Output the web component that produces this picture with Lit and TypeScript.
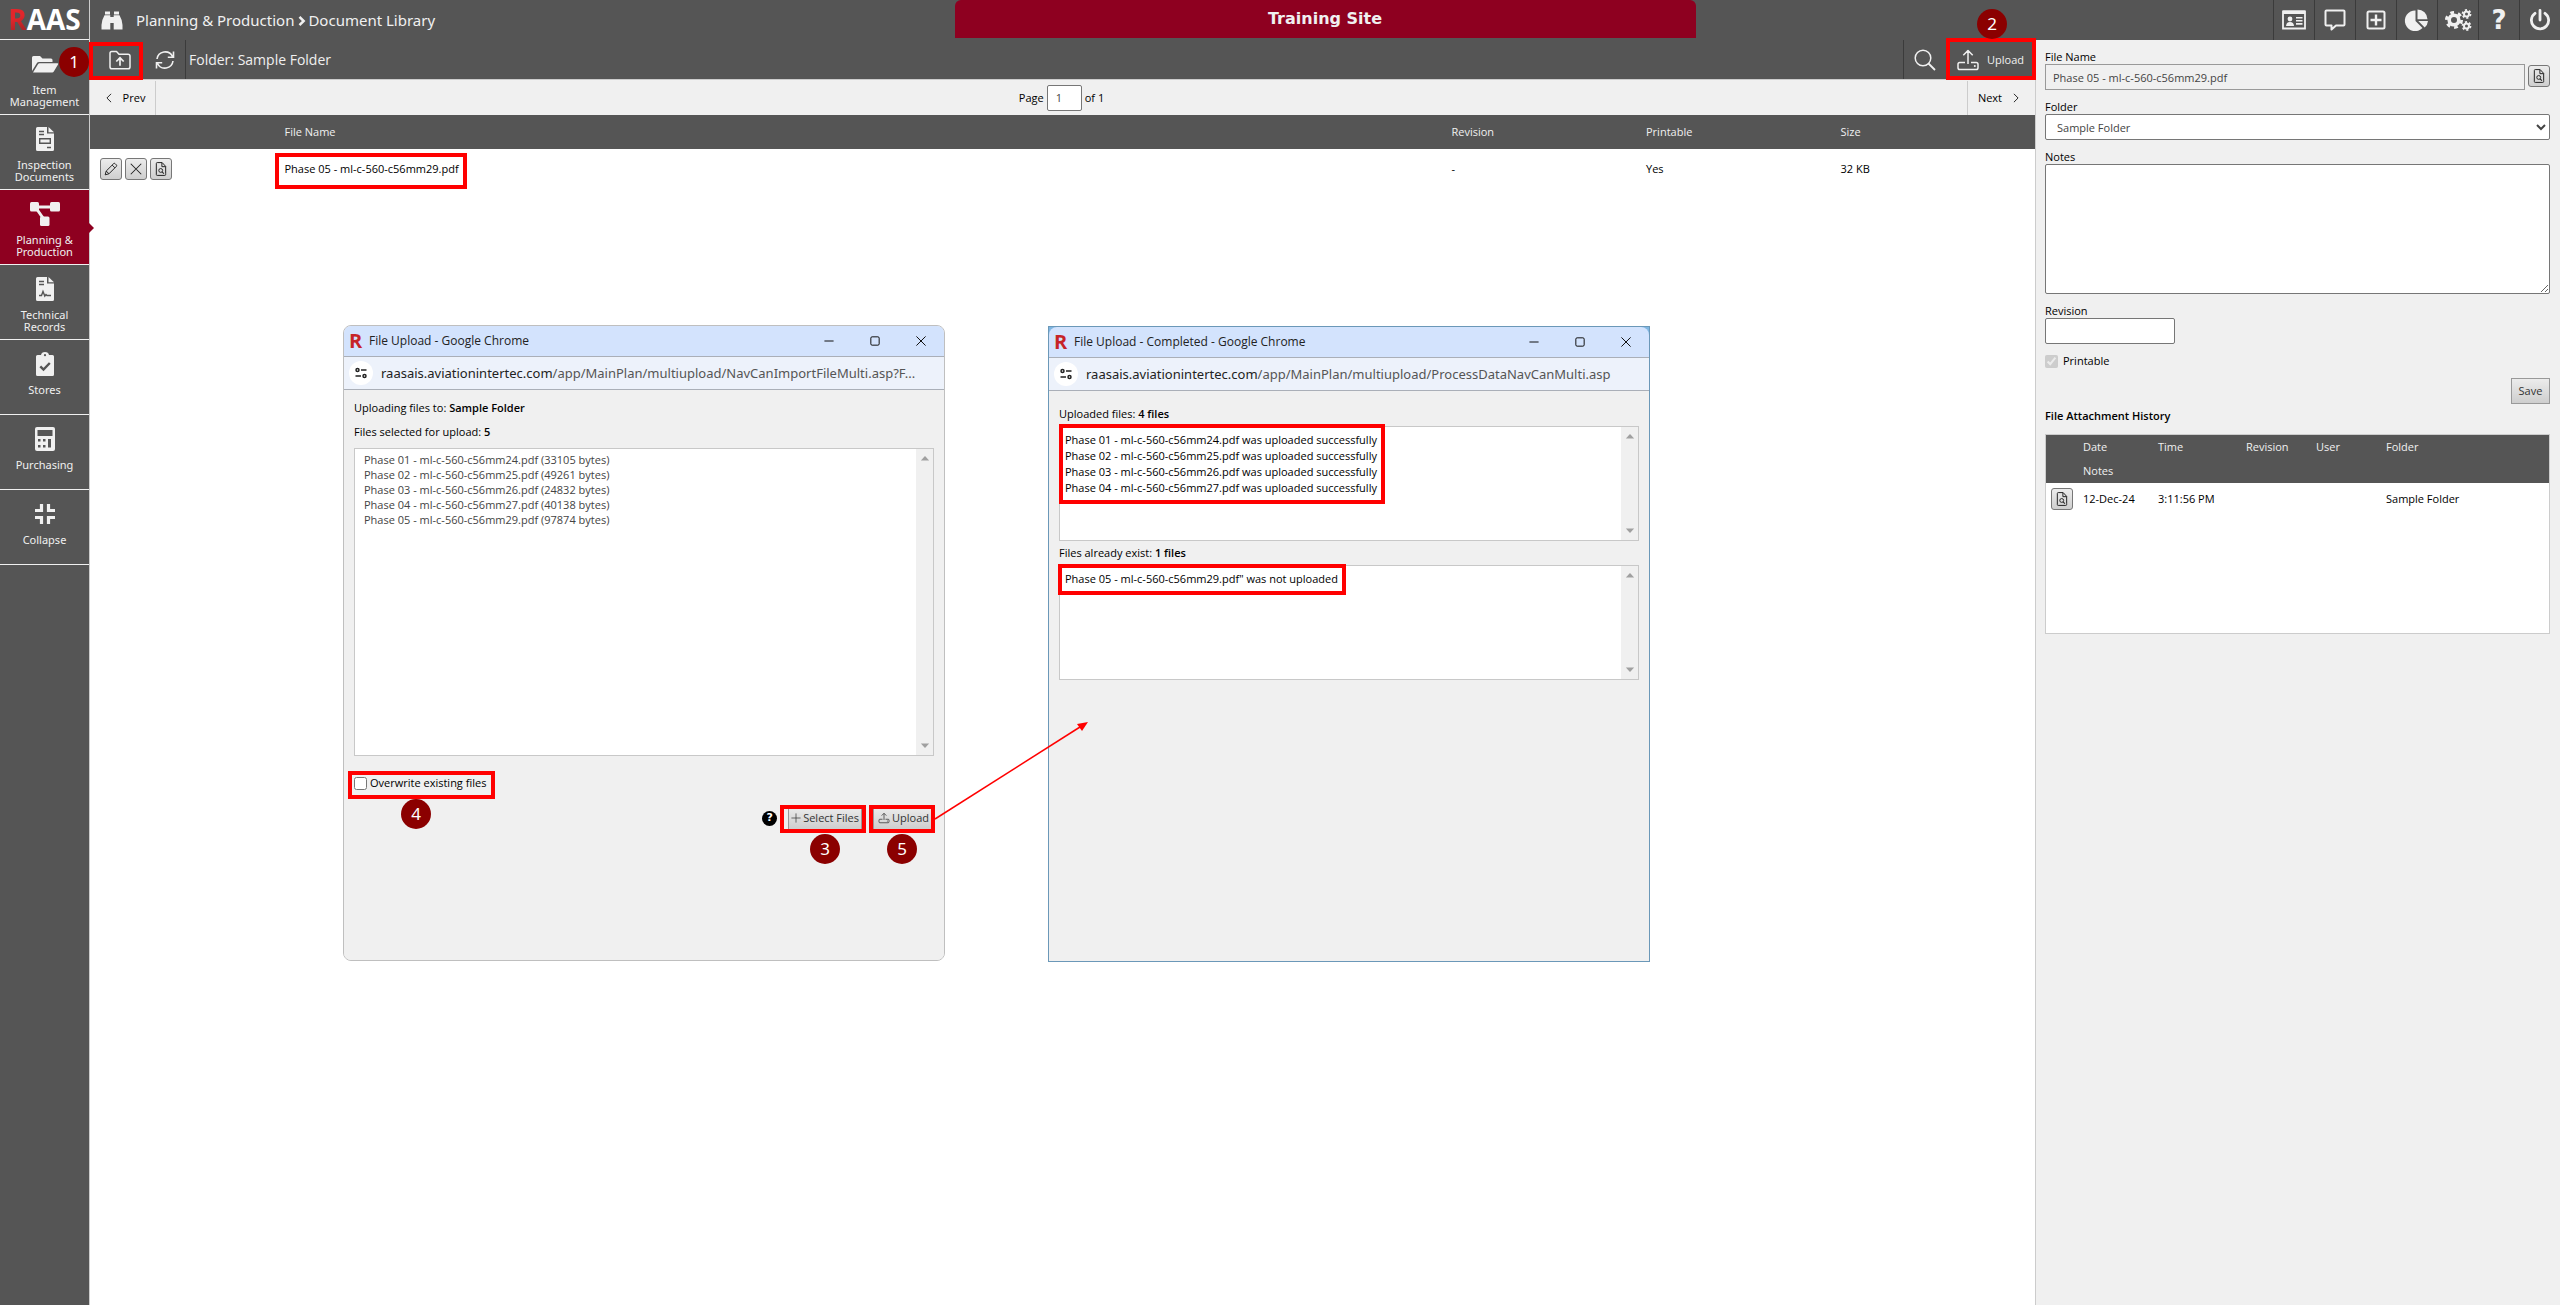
import { LitElement, html, svg, css, type TemplateResult } from "lit";
import { customElement, property } from "lit/decorators.js";
import { classMap } from "lit/directives/class-map.js";

/* Every icon is drawn on a 24 x 24 grid with currentColor. */
const icons: Record<string, TemplateResult> = {
  folderOpen: svg`<path fill="currentColor" d="M-1 19V5.500Q-1 4 .5 4H7l2.500 2.500H18Q19.500 6.500 19.500 8v2H6Q4.500 10 3.800 11.300ZM0 20.500 5 12.300Q5.600 11.300 6.700 11.300H24.300Q25.800 11.300 25 12.600L20.800 19.600Q20.200 20.500 19.200 20.500Z"/>`,
  invoice: svg`<path fill="currentColor" d="M3 1.500Q3 0 4.500 0H14v6.500h7v16Q21 24 19.500 24h-15Q3 24 3 22.500Z"/><path fill="currentColor" d="M15.500 0 21 5.300H15.500Z"/><path stroke="#555" stroke-width="1.400" fill="none" d="M6 4.500h5M6 7.500h5M14 20.500h4M6.700 11.700h10.600v4.600H6.700Z"/>`,
  nodes: svg`<g fill="currentColor"><rect x="-3" y="0" width="9" height="9.500" rx="1.500"/><rect x="17" y="0" width="10" height="9.500" rx="1.500"/><rect x="7" y="14.500" width="9.500" height="9.500" rx="1.500"/></g><path stroke="currentColor" stroke-width="3" d="M4 5H18M3 6 10 16"/>`,
  contract: svg`<path fill="currentColor" d="M3 1.500Q3 0 4.500 0H14v6.500h7v16Q21 24 19.500 24h-15Q3 24 3 22.500Z"/><path fill="currentColor" d="M15.500 0 21 5.300H15.500Z"/><path stroke="#555" stroke-width="1.400" fill="none" d="M6 4.500h5M6 7.500h5M6 18.500H8.500L10 14.500 11.800 19 13 17.500 14 18.500H18"/>`,
  clipboard: svg`<path fill="currentColor" d="M4.500 3H8Q8.500 0 12 0t4 3h3.500Q21 3 21 4.500v18Q21 24 19.500 24h-15Q3 24 3 22.500v-18Q3 3 4.500 3Z"/><circle cx="12" cy="3.200" r="1.100" fill="#555"/><path fill="none" stroke="#555" stroke-width="2.400" d="m7.300 14.300 3.200 3.200 6.300-6.500"/>`,
  calculator: svg`<rect x="2" y="0" width="20" height="24" rx="2" fill="currentColor"/><path fill="#555" d="M4.500 3h15v6h-15ZM5 12h2.500v2.500H5Zm5 0h2.500v2.500H10Zm5 0h3v8.500h-3ZM5 18h2.500v2.500H5Zm5 0h2.500v2.500H10Z"/>`,
  compress: svg`<path fill="none" stroke="currentColor" stroke-width="3.200" d="M2 8.500H8.500V2M15.500 2V8.500H22M2 15.500H8.500V22M15.500 22V15.500H22"/>`,
  binoculars: svg`<path fill="currentColor" d="M5 3.500h5v3H5ZM14 3.500h5v3h-5ZM4.500 7.300H10.300V21.500H1.500V17Q1.700 12 4.500 7.300ZM19.500 7.300H13.700V21.500h8.800V17Q22.300 12 19.500 7.300ZM10.300 9h3.400v6h-3.400Z"/>`,
  chevron: svg`<path fill="none" stroke="currentColor" stroke-width="6" d="M6 2 16 12 6 22"/>`,
  idCard: svg`<path fill="none" stroke="currentColor" stroke-width="1.800" d="M1 3.500H23V20.500H1Z"/><path fill="currentColor" d="M1 2.500h22V6H1Z"/><circle cx="8" cy="11" r="2.400" fill="currentColor"/><path fill="currentColor" d="M4 18q.2-4 4-4t4 4Z"/><path stroke="currentColor" stroke-width="1.600" d="M14 9.700h6.500M14 12.800h6.500M14 15.900h6.500"/>`,
  comment: svg`<path fill="none" stroke="currentColor" stroke-width="2" stroke-linejoin="round" d="M3.500 2.500h17q1 0 1 1v13q0 1-1 1H13L8.500 21.500V17.500h-5q-1 0-1-1v-13q0-1 1-1Z"/>`,
  plusBox: svg`<rect x="3.500" y="3.500" width="17" height="17" rx="1.500" fill="none" stroke="currentColor" stroke-width="2"/><path stroke="currentColor" stroke-width="2.400" d="M12 6.500v11M6.500 12h11"/>`,
  pie: svg`<path fill="currentColor" d="M10.500 2.500V13l7 7A10.300 10.300 0 1 1 10.500 2.500ZM12.500 1.500A10 10 0 0 1 22.500 11.300H12.500ZM13.300 13H23a10 10 0 0 1-3.300 6.500Z"/>`,
  gears: svg`<g fill="none" stroke="currentColor"><circle cx="8" cy="12" r="4.800" stroke-width="3.600"/><circle cx="8" cy="12" r="7.600" stroke-width="2.800" stroke-dasharray="3.800 4.158"/><circle cx="20.500" cy="6" r="2.500" stroke-width="2"/><circle cx="20.500" cy="6" r="4" stroke-width="1.800" stroke-dasharray="2.100 2.088"/><circle cx="20.500" cy="18" r="2.500" stroke-width="2"/><circle cx="20.500" cy="18" r="4" stroke-width="1.800" stroke-dasharray="2.100 2.088"/></g>`,
  power: svg`<path fill="none" stroke="currentColor" stroke-width="2.800" stroke-linecap="round" d="M7 5.300a8.600 8.600 0 1 0 10 0M12 2.500v9.500"/>`,
  folderUp: svg`<path fill="none" stroke="currentColor" stroke-width="1.500" stroke-linejoin="round" d="M2 5.300Q2 3.500 3.800 3.500H8.500L11 6.300h9Q22 6.300 22 8.300V19Q22 20.800 20 20.800H4Q2 20.800 2 19Z"/><path fill="none" stroke="currentColor" stroke-width="1.700" d="M12 17.800V10.500M8.300 13.500 12 9.800l3.700 3.700"/>`,
  refresh: svg`<path fill="none" stroke="currentColor" stroke-width="1.600" d="M4 11A8.200 8.200 0 0 1 19.500 8.500M20 13A8.200 8.200 0 0 1 4.500 15.500M20.500 3.500v5.700h-5.700M3.500 20.500v-5.700H9.200"/>`,
  search: svg`<circle cx="10" cy="10" r="7.800" fill="none" stroke="currentColor" stroke-width="1.500"/><path stroke="currentColor" stroke-width="1.800" d="m15.500 15.500 6.500 6.500"/>`,
  upload: svg`<path fill="none" stroke="currentColor" stroke-width="1.500" stroke-linejoin="round" d="M12 16V3M7.300 7.300 12 2.500l4.700 4.800M9 14.500H3.800Q2 14.500 2 16.300v3.400Q2 21.500 3.800 21.500H20.200Q22 21.500 22 19.700V16.300Q22 14.500 20.200 14.500H15"/><circle cx="18.800" cy="18" r="1" fill="currentColor"/>`,
  pencil: svg`<path fill="none" stroke="currentColor" stroke-width="1.700" stroke-linejoin="round" d="M2 22 3.800 15.500 16.500 2.800Q17.700 1.600 19 2.800L21.200 5Q22.400 6.300 21.200 7.500L8.500 20.200ZM14 5.300 18.700 10M3.800 15.500 8.500 20.200"/>`,
  cross: svg`<path stroke="currentColor" stroke-width="1.800" d="M3 3 21 21M21 3 3 21"/>`,
  docSearch: svg`<path fill="none" stroke="currentColor" stroke-width="1.700" stroke-linejoin="round" d="M20 20V7.500L14 1H5.500Q4 1 4 2.500v19Q4 23 5.500 23H18.500Q20 23 20 21.500ZM13.500 1.500V8H20"/><circle cx="11.500" cy="14.500" r="3.300" fill="none" stroke="currentColor" stroke-width="1.600"/><path stroke="currentColor" stroke-width="1.800" d="m13.800 16.800 3.200 3.200"/>`,
  left: svg`<path fill="none" stroke="currentColor" stroke-width="2" d="M17 2 7 12 17 22"/>`,
  right: svg`<path fill="none" stroke="currentColor" stroke-width="2" d="M7 2 17 12 7 22"/>`,
  plus: svg`<path stroke="currentColor" stroke-width="1.700" d="M12 1v22M1 12h22"/>`,
  minimise: svg`<path stroke="currentColor" stroke-width="2.400" d="M1 12h22"/>`,
  maximise: svg`<rect x="2" y="2" width="20" height="20" rx="3" fill="none" stroke="currentColor" stroke-width="2.400"/>`,
  close: svg`<path stroke="currentColor" stroke-width="2.400" d="M1 1 23 23M23 1 1 23"/>`,
  tune: svg`<g fill="none" stroke="currentColor" stroke-width="3"><circle cx="5" cy="6" r="3"/><path d="M12 6h11M1 18h11"/><circle cx="19" cy="18" r="3"/></g>`,
  up: svg`<path fill="currentColor" d="M2 18 12 7 22 18Z"/>`,
  down: svg`<path fill="currentColor" d="M2 6 12 17 22 6Z"/>`,
};

const icon = (name: string, size = "s24") =>
  html`<svg class="icon ${size}" viewBox="0 0 24 24" aria-hidden="true">${icons[name]}</svg>`;

const shared = css`
  * { box-sizing: border-box; }
  .icon { display: block; flex: none; overflow: visible; }
  .s10 { width: 10px; height: 10px; }
  .s12 { width: 12px; height: 12px; }
  .s14 { width: 14px; height: 14px; }
  .s24 { width: 24px; height: 24px; }
  button, input, select, textarea { font: inherit; margin: 0; color: #444; }
  button { display: flex; align-items: center; justify-content: center; padding: 0; border: 0; background: none; color: inherit; }
  .push { display: flex; align-items: center; gap: 2px; border: 1px solid #999; background: linear-gradient(#ececec, #cecece); color: #333; }
`;

@customElement("popup-window")
export class PopupWindow extends LitElement {
  @property() heading = "";
  @property() domain = "";
  @property() path = "";
  @property({ type: Boolean, reflect: true }) active = false;

  static styles = [shared, css`
    :host { display: flex; flex-direction: column; border: 1px solid #bfbfbf; border-radius: 8px; background: #f0f0f0; overflow: hidden; }
    :host([active]) { border-color: #6b98b8; border-radius: 0; background: linear-gradient(#7fb6e2 10px, #f0f0f0 10px); }
    .bar { display: flex; align-items: center; height: 31px; padding: 0 18px 0 5px; background: #d3e3fd; border-bottom: 1px solid #aaafb8; color: #222; font-size: 12px; }
    :host([active]) .bar { border-radius: 8px 8px 0 0; }
    .mark { width: 20px; font-size: 20px; font-weight: 700; line-height: 20px; color: #c62428; }
    .controls { display: flex; gap: 36px; margin-left: auto; color: #111; }
    .address { display: flex; align-items: center; gap: 8px; height: 33px; padding: 0 5px; background: #edf2fb; border-bottom: 1px solid #aaafb8; font-family: "Noto Sans", "Open Sans", sans-serif; font-size: 13px; color: #555; white-space: nowrap; }
    .site { display: flex; align-items: center; justify-content: center; width: 24px; height: 24px; border-radius: 50%; background: #fff; color: #222; }
    .domain { color: #222; }
    .body { flex: 1; background: #f0f0f0; }
  `];

  render() {
    return html`
      <div class="bar">
        <span class="mark">R</span><span>${this.heading}</span>
        <div class="controls">
          <button aria-label="Minimise">${icon("minimise", "s10")}</button>
          <button aria-label="Maximise">${icon("maximise", "s10")}</button>
          <button aria-label="Close">${icon("close", "s10")}</button>
        </div>
      </div>
      <div class="address">
        <button class="site" aria-label="Site information">${icon("tune", "s12")}</button>
        <span><span class="domain">${this.domain}</span>${this.path}</span>
      </div>
      <div class="body"><slot></slot></div>`;
  }
}

const navItems: [string, string][] = [
  ["Item Management", "folderOpen"],
  ["Inspection Documents", "invoice"],
  ["Planning & Production", "nodes"],
  ["Technical Records", "contract"],
  ["Stores", "clipboard"],
  ["Purchasing", "calculator"],
  ["Collapse", "compress"],
];

const tools: [string, string][] = [
  ["Contacts", "idCard"],
  ["Messages", "comment"],
  ["Add", "plusBox"],
  ["Reports", "pie"],
  ["Settings", "gears"],
  ["Help", ""],
  ["Log off", "power"],
];

const selected: [string, number][] = [
  ["Phase 01 - ml-c-560-c56mm24.pdf", 33105],
  ["Phase 02 - ml-c-560-c56mm25.pdf", 49261],
  ["Phase 03 - ml-c-560-c56mm26.pdf", 24832],
  ["Phase 04 - ml-c-560-c56mm27.pdf", 40138],
  ["Phase 05 - ml-c-560-c56mm29.pdf", 97874],
];

@customElement("app-root")
export class AppRoot extends LitElement {
  static styles = [shared, css`
    :host { position: relative; display: flex; min-height: 100vh; overflow: hidden; background: #fff; color: #000; font-family: "Open Sans", "Noto Sans", sans-serif; font-size: 11px; line-height: 14px; }
    b { font-weight: 600; }

    .nav { flex: none; width: 90px; background: #555; border-right: 1px solid #ccc; color: #f0f0f0; font-family: "Noto Sans", "Open Sans", sans-serif; }
    .logo { display: flex; align-items: center; justify-content: center; height: 40px; border-bottom: 1px solid #f0f0f0; font-family: "Open Sans", sans-serif; font-size: 28px; font-weight: 700; line-height: 39px; color: #fff; text-decoration: none; }
    .logo-r { background: linear-gradient(160deg, #e2262b 45%, #ac2428 75%); background-clip: text; color: transparent; }
    .nav-item { position: relative; display: flex; flex-direction: column; align-items: center; gap: 8px; height: 75px; padding: 12px 8px 0; border-bottom: 1px solid #f0f0f0; line-height: 12px; text-align: center; color: inherit; text-decoration: none; }
    .nav-item.current { background: #8e0020; }
    .nav-item.current::after { content: ""; position: absolute; right: -5px; top: 33px; border: solid transparent; border-width: 5px 0 5px 5px; border-left-color: #8e0020; }

    .page { flex: 1; display: flex; flex-direction: column; min-width: 0; }
    .top { display: grid; grid-template-columns: 35fr 30fr 35fr; height: 40px; background: #555; color: #f0f0f0; }
    .crumbs { display: flex; align-items: center; padding-left: 10px; font-family: "Noto Sans", "Open Sans", sans-serif; font-size: 15px; white-space: nowrap; }
    .crumbs .s24 { margin-right: 12px; }
    .crumbs .s10 { margin: 2px 1px 0 3px; }
    .banner { height: 38px; border-radius: 6px 6px 0 0; background: #8e0020; font-family: "DejaVu Sans", sans-serif; font-size: 16px; font-weight: 700; line-height: 38px; text-align: center; }
    .tools { display: flex; justify-content: flex-end; }
    .tool { width: 41px; border-left: 1px solid #3b3b3b; }
    .help { font-family: "DejaVu Sans", sans-serif; font-size: 26px; font-weight: 700; }

    .content { flex: 1; display: flex; min-height: 0; }
    .main { flex: 1; min-width: 0; }
    .toolbar { display: flex; height: 40px; background: #555; border-bottom: 1px solid #ccc; color: #f0f0f0; }
    .folder-tools { display: flex; gap: 21px; padding: 0 8px 0 18px; border-right: 1px solid #3b3b3b; }
    .folder-name { display: flex; align-items: center; padding-left: 3px; font-size: 14px; }
    .search { width: 42px; margin-left: auto; border-left: 1px solid #3b3b3b; }
    .upload { gap: 7px; width: 90px; }

    .pager { display: flex; align-items: center; justify-content: space-between; height: 35px; background: #f0f0f0; }
    .prev, .next { gap: 9px; height: 34px; align-self: flex-end; }
    .prev { width: 66px; padding-left: 4px; border-right: 1px solid #ccc; }
    .next { width: 68px; padding-right: 4px; border-left: 1px solid #ccc; }
    .page-pick { display: flex; align-items: center; gap: 3px; }
    .page-pick input { width: 35px; height: 26px; padding: 0 8px; }

    table { width: 100%; border-collapse: collapse; table-layout: fixed; }
    th, td { padding: 0; font-weight: 400; text-align: left; }
    .files th { height: 34px; background: #555; color: #f0f0f0; }
    .files td { height: 40px; }
    .files .actions { width: 10%; }
    .files .name { width: 60%; }
    .row-actions { display: flex; gap: 3px; padding-left: 10px; }
    .mini { width: 22px; height: 22px; border: 1px solid #777; border-radius: 3px; background: linear-gradient(#ececec, #cecece); color: #222; }

    .side { flex: none; width: 525px; padding: 10px 10px 10px 9px; border-left: 1px solid #ccc; background: #f0f0f0; }
    .field { display: block; margin-bottom: 10px; }
    .box { display: block; width: 100%; height: 26px; padding: 0 7px; border: 1px solid #767676; border-radius: 2px; background: #fff; }
    .with-button { display: flex; gap: 3px; align-items: flex-start; }
    .with-button .box { background: #f0f0f0; border-color: #999; border-radius: 0; }
    .with-button .mini { margin-top: 1px; flex: none; }
    .notes { height: 130px; }
    .short { width: 130px; }
    .tick { display: flex; align-items: center; gap: 5px; }
    input[type="checkbox"] { width: 13px; height: 13px; }
    .save { width: 39px; height: 26px; margin: 10px 0 5px auto; }
    .side h2 { margin: 0 0 11px; font-size: 11px; line-height: 14px; font-weight: 600; }
    .history { height: 200px; border: 1px solid #ccc; background: #fff; }
    .history th { height: 24px; background: #555; color: #f0f0f0; }
    .history td { height: 32px; }
    .history .mini { margin-left: 5px; }
    .c-icon { width: 37px; } .c-date { width: 75px; } .c-time { width: 88px; } .c-rev, .c-user { width: 70px; }

    .win { position: absolute; width: 602px; height: 636px; }
    .win.one { left: 343px; top: 325px; }
    .win.two { left: 1048px; top: 326px; }
    .pane { display: flex; flex-direction: column; padding: 10px 10px; line-height: 16px; }
    .pane p { margin: 0 0 8px; }
    .scroller { display: flex; border: 1px solid #c8c8c8; background: #fff; }
    .scroller textarea { flex: 1; padding: 3px 9px; border: 0; outline: 0; resize: none; overflow: hidden; background: none; line-height: 15px; }
    .scroller ul { flex: 1; margin: 0; padding: 5px; list-style: none; }
    .track { display: flex; flex-direction: column; justify-content: space-between; align-items: center; width: 17px; padding: 4px 0; background: #f0f0f0; color: #a0a0a0; }
    .tall { height: 308px; }
    .low { height: 115px; }
    .overwrite { display: flex; align-items: center; gap: 3px; margin-top: 19px; }
    .send { display: flex; align-items: center; justify-content: flex-end; gap: 11px; margin-top: 15px; }
    .send .push { height: 24px; padding: 0 4px; }
    .send .push.pick { padding: 0 2px; }
    .about { width: 15px; height: 15px; border-radius: 50%; background: #000; color: #fff; font-family: "DejaVu Sans", sans-serif; font-weight: 700; }
    .pane.done { padding-top: 15px; }
    .pane.done p { margin: 0 0 4px; }
    .pane.done p + .scroller { margin-bottom: 4px; }

    .mark { position: absolute; border: 4px solid #f00; pointer-events: none; }
    .m-folder { left: 89px; top: 42px; width: 54px; height: 38px; }
    .m-upload { left: 1946px; top: 38px; width: 90px; height: 42px; }
    .m-file { left: 275px; top: 153px; width: 192px; height: 36px; }
    .m-over { left: 348px; top: 771px; width: 147px; height: 28px; }
    .m-pick { left: 780px; top: 805px; width: 86px; height: 28px; }
    .m-send { left: 869px; top: 805px; width: 66px; height: 28px; }
    .m-ok { left: 1059px; top: 424px; width: 326px; height: 80px; }
    .m-no { left: 1058px; top: 564px; width: 288px; height: 31px; }
    .step { position: absolute; width: 30px; height: 30px; border-radius: 50%; background: #8b0000; color: #fff; font-family: "Noto Sans", sans-serif; font-size: 17px; line-height: 30px; text-align: center; }
    .s-1 { left: 59px; top: 47px; }
    .s-2 { left: 1977px; top: 9px; }
    .s-3 { left: 810px; top: 834px; }
    .s-4 { left: 401px; top: 799px; }
    .s-5 { left: 887px; top: 834px; }
    .arrow { position: absolute; left: 935px; top: 720px; width: 154px; height: 100px; pointer-events: none; }
  `];

  private track() {
    return html`<div class="track" aria-hidden="true">${icon("up", "s10")}${icon("down", "s10")}</div>`;
  }

  private mini(name: string, label: string) {
    return html`<button class="mini" aria-label=${label}>${icon(name, "s14")}</button>`;
  }

  render() {
    return html`
      <nav class="nav">
        <a class="logo" href="#" aria-label="RAAS"><span class="logo-r">R</span>AAS</a>
        ${navItems.map(([label, glyph]) => html`
          <a href="#" class=${classMap({ "nav-item": true, current: glyph === "nodes" })}>${icon(glyph)}<span>${label}</span></a>`)}
      </nav>

      <div class="page">
        <header class="top">
          <div class="crumbs">${icon("binoculars")}<span>Planning &amp; Production</span>${icon("chevron", "s10")}<span>Document Library</span></div>
          <div class="banner">Training Site</div>
          <div class="tools">
            ${tools.map(([label, glyph]) => html`<button class="tool" aria-label=${label}>${glyph ? icon(glyph) : html`<span class="help">?</span>`}</button>`)}
          </div>
        </header>

        <div class="content">
          <main class="main">
            <div class="toolbar">
              <div class="folder-tools">
                <button aria-label="Parent folder">${icon("folderUp")}</button>
                <button aria-label="Refresh">${icon("refresh")}</button>
              </div>
              <div class="folder-name">Folder: Sample Folder</div>
              <button class="search" aria-label="Search">${icon("search")}</button>
              <button class="upload">${icon("upload")}<span>Upload</span></button>
            </div>
            <div class="pager">
              <button class="prev">${icon("left", "s10")}<span>Prev</span></button>
              <div class="page-pick"><label for="page">Page</label><input id="page" class="box" value="1" /><span>of 1</span></div>
              <button class="next"><span>Next</span>${icon("right", "s10")}</button>
            </div>
            <table class="files">
              <thead><tr><th class="actions"></th><th class="name">File Name</th><th>Revision</th><th>Printable</th><th>Size</th></tr></thead>
              <tbody><tr>
                <td><div class="row-actions">${this.mini("pencil", "Edit")}${this.mini("cross", "Delete")}${this.mini("docSearch", "View")}</div></td>
                <td>Phase 05 - ml-c-560-c56mm29.pdf</td><td>-</td><td>Yes</td><td>32 KB</td>
              </tr></tbody>
            </table>
          </main>

          <aside class="side">
            <div class="field">
              <label for="file">File Name</label>
              <div class="with-button"><input id="file" class="box" readonly value="Phase 05 - ml-c-560-c56mm29.pdf" />${this.mini("docSearch", "View file")}</div>
            </div>
            <div class="field"><label for="folder">Folder</label><select id="folder" class="box"><option>Sample Folder</option></select></div>
            <div class="field"><label for="notes">Notes</label><textarea id="notes" class="box notes"></textarea></div>
            <div class="field"><label for="revision">Revision</label><input id="revision" class="box short" /></div>
            <label class="tick"><input type="checkbox" checked disabled />Printable</label>
            <button class="push save">Save</button>
            <h2>File Attachment History</h2>
            <div class="history">
              <table>
                <thead>
                  <tr><th class="c-icon"></th><th class="c-date">Date</th><th class="c-time">Time</th><th class="c-rev">Revision</th><th class="c-user">User</th><th>Folder</th></tr>
                  <tr><th></th><th colspan="5">Notes</th></tr>
                </thead>
                <tbody><tr><td>${this.mini("docSearch", "View version")}</td><td>12-Dec-24</td><td>3:11:56 PM</td><td></td><td></td><td>Sample Folder</td></tr></tbody>
              </table>
            </div>
          </aside>
        </div>
      </div>

      <popup-window class="win one" heading="File Upload - Google Chrome" domain="raasais.aviationintertec.com" path="/app/MainPlan/multiupload/NavCanImportFileMulti.asp?F...">
        <div class="pane">
          <p>Uploading files to: <b>Sample Folder</b></p>
          <p><label for="queue">Files selected for upload: <b>${selected.length}</b></label></p>
          <div class="scroller tall">
            <textarea id="queue" readonly .value=${selected.map(([n, b]) => `${n} (${b} bytes)`).join("\n")}></textarea>
            ${this.track()}
          </div>
          <label class="overwrite"><input type="checkbox" />Overwrite existing files</label>
          <div class="send">
            <button class="about" aria-label="About uploading">?</button>
            <button class="push pick">${icon("plus", "s10")}Select Files</button>
            <button class="push">${icon("upload", "s12")}Upload</button>
          </div>
        </div>
      </popup-window>

      <popup-window class="win two" active heading="File Upload - Completed - Google Chrome" domain="raasais.aviationintertec.com" path="/app/MainPlan/multiupload/ProcessDataNavCanMulti.asp">
        <div class="pane done">
          <p>Uploaded files: <b>4 files</b></p>
          <div class="scroller low"><ul>${selected.slice(0, 4).map(([n]) => html`<li>${n} was uploaded successfully</li>`)}</ul>${this.track()}</div>
          <p>Files already exist: <b>1 files</b></p>
          <div class="scroller low"><ul><li>${selected[4][0]}" was not uploaded</li></ul>${this.track()}</div>
        </div>
      </popup-window>

      ${["folder", "upload", "file", "over", "pick", "send", "ok", "no"].map((m) => html`<div class="mark m-${m}"></div>`)}
      ${[1, 2, 3, 4, 5].map((n) => html`<div class="step s-${n}">${n}</div>`)}
      <svg class="arrow" viewBox="0 0 154 100" aria-hidden="true">
        <path stroke="#f00" stroke-width="1.500" d="M0 99 145 7"/><path fill="#f00" d="M153 2 147 11 142 4Z"/>
      </svg>`;
  }
}
